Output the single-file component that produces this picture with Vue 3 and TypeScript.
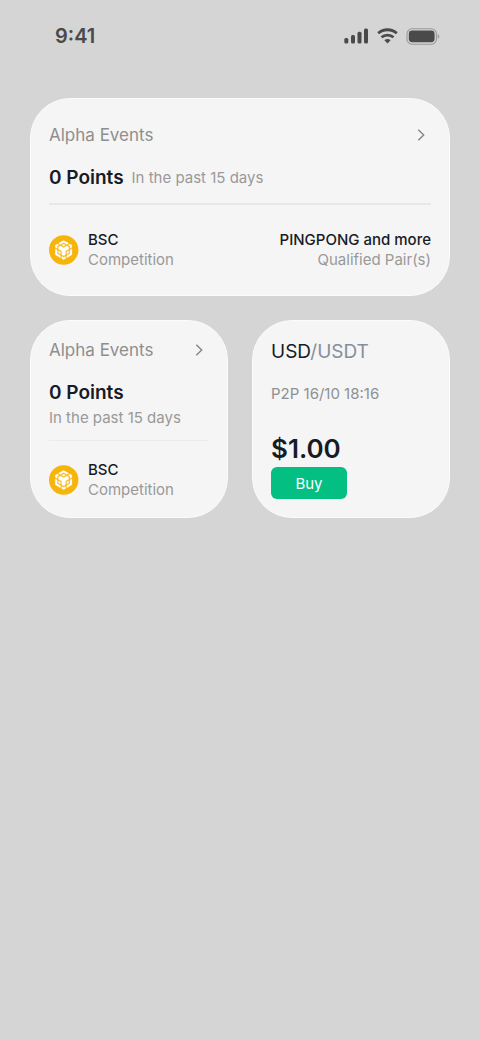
<script setup lang="ts">
interface Competition {
  chain: string
  kind: string
}

interface AlphaEvents {
  title: string
  points: string
  period: string
  competition: Competition
  pairs: string
  pairsLabel: string
}

const alpha: AlphaEvents = {
  title: 'Alpha Events',
  points: '0 Points',
  period: 'In the past 15 days',
  competition: { chain: 'BSC', kind: 'Competition' },
  pairs: 'PINGPONG and more',
  pairsLabel: 'Qualified Pair(s)',
}

const quote = { base: 'USD', counter: '/USDT', source: 'P2P 16/10 18:16', price: '$1.00' }

const cards = ['wide', 'small'] as const
</script>

<template>
  <div class="screen">
    <header class="status">
      <time class="clock">9:41</time>
      <div class="indicators">
        <svg width="25" height="16" viewBox="0 0 25 16" aria-hidden="true">
          <rect x="0.300" y="10" width="4" height="5.500" rx="1.500" />
          <rect x="7" y="7" width="4" height="8.500" rx="1.500" />
          <rect x="13.500" y="3.700" width="4" height="11.800" rx="1.500" />
          <rect x="20" y="0.500" width="4" height="15" rx="1.500" />
        </svg>
        <svg width="21" height="16" viewBox="0 0 21 16" aria-hidden="true">
          <path d="M1.200 5.200C6.300 0.600 14.700 0.600 19.800 5.200" fill="none" stroke="#4a4a4a" stroke-width="2.800" />
          <path d="M4.500 9.300c3.300-3 8.700-3 12 0" fill="none" stroke="#4a4a4a" stroke-width="2.700" />
          <path d="M7.400 12.300c1.800-1.600 4.400-1.600 6.200 0L10.500 15.600z" />
        </svg>
        <svg width="34" height="17" viewBox="0 0 34 17" aria-hidden="true">
          <rect x="1" y="0.800" width="29.400" height="15.400" rx="5" fill="none" stroke="#999" stroke-width="1.100" />
          <rect x="2.800" y="2.600" width="25.800" height="11.600" rx="3.400" />
          <path d="M31.800 6c1.900.7 1.900 4.300 0 5z" fill="#999" />
        </svg>
      </div>
    </header>

    <main class="widgets">
      <section v-for="size in cards" :key="size" class="card" :class="size">
        <div class="heading">
          <h2 class="title">{{ alpha.title }}</h2>
          <button class="more" type="button" aria-label="Open Alpha Events">
            <svg width="8" height="12" viewBox="0 0 8 12" aria-hidden="true">
              <path d="M1.300 0.800L6.700 6L1.300 11.200" fill="none" stroke="#858585" stroke-width="1.400" />
            </svg>
          </button>
        </div>
        <div class="score">
          <strong class="points">{{ alpha.points }}</strong>
          <span class="period">{{ alpha.period }}</span>
        </div>
        <hr class="divider" />
        <div class="event">
          <svg class="coin" viewBox="0 0 30 30" aria-hidden="true">
            <circle cx="14.700" cy="15" r="14.700" fill="#f7b50c" />
            <path
              transform="translate(5 5.400) scale(.8)"
              fill="#fff"
              stroke="#fff"
              stroke-width=".35"
              d="M5.631 3.676 12.001 0l6.367 3.676-2.340 1.358L12 2.716 7.972 5.034l-2.340-1.358Zm12.737 4.636-2.340-1.358L12 9.272 7.972 6.954l-2.340 1.358v2.716l4.026 2.318v4.636L12 19.341l2.341-1.359v-4.636l4.027-2.318V8.312Zm0 7.352v-2.716l-2.340 1.358v2.716l2.340-1.358Zm1.663.96-4.027 2.318v2.717l6.368-3.677V10.630l-2.340 1.358v4.636Zm-2.340-10.630 2.340 1.358v2.716l2.341-1.358V5.994l-2.340-1.358-2.342 1.358ZM9.657 19.926v2.716L12 24l2.341-1.359v-2.716l-2.340 1.358-2.342-1.358Zm-4.027-4.262 2.341 1.358v-2.716l-2.340-1.358v2.716Zm4.027-9.670L12 7.352l2.341-1.358L12 4.636 9.658 5.994Zm-5.690 1.358 2.341-1.358-2.340-1.358-2.341 1.358V8.710l2.340 1.358V7.352Zm0 4.636L1.627 10.630v7.353l6.368 3.677v-2.717L3.968 16.624v-4.636Z"
            />
          </svg>
          <div class="lines">
            <span class="name">{{ alpha.competition.chain }}</span>
            <span class="note">{{ alpha.competition.kind }}</span>
          </div>
          <div v-if="size === 'wide'" class="lines pairs">
            <span class="name">{{ alpha.pairs }}</span>
            <span class="note">{{ alpha.pairsLabel }}</span>
          </div>
        </div>
      </section>

      <section class="card quote">
        <h2 class="pair">{{ quote.base }}<span class="counter">{{ quote.counter }}</span></h2>
        <p class="source">{{ quote.source }}</p>
        <strong class="price">{{ quote.price }}</strong>
        <button class="buy" type="button">Buy</button>
      </section>
    </main>
  </div>
</template>

<style>
body {
  background: #d5d5d5;
}
</style>

<style scoped>
.screen {
  min-height: 100vh;
  background: #d5d5d5;
  font-family: Inter, 'Liberation Sans', sans-serif;
  color: #171b26;
}

.status {
  display: flex;
  align-items: center;
  justify-content: space-between;
  padding: 24px 40px 0 55px;
  height: 24px;
}

.clock {
  font-size: 20px;
  line-height: 24px;
  font-weight: 600;
  color: #4a4a4a;
}

.indicators {
  display: flex;
  align-items: center;
  gap: 8px;
  fill: #4a4a4a;
}

.widgets {
  display: grid;
  grid-template-columns: 1fr 1fr;
  gap: 24px;
  padding: 50px 30px 30px;
}

.card {
  box-sizing: border-box;
  min-width: 0;
  padding: 18px 18px 17px;
  border: 1px solid #fbfbfb;
  border-radius: 40px;
  background: #f5f5f5;
}

.wide {
  padding: 25px 18px;
  grid-column: 1 / -1;
}

.heading {
  display: flex;
  align-items: center;
  justify-content: space-between;
}

.title {
  margin: 0;
  font-size: 17px;
  line-height: 22px;
  font-weight: 400;
  color: #8e8e8e;
}

.more {
  display: flex;
  padding: 4px 6px;
  border: 0;
  background: none;
}

.score {
  display: flex;
  flex-direction: column;
  margin-top: 17px;
}

.wide .score {
  flex-direction: row;
  align-items: center;
  gap: 8px;
}

.points {
  font-size: 19px;
  line-height: 29px;
  font-weight: 600;
}

.period {
  font-size: 15px;
  line-height: 22px;
  color: #999;
}

.divider {
  height: 1px;
  margin: 11px 0 19px;
  border: 0;
  background: #ececec;
}

.wide .divider {
  height: 2px;
  margin: 11px 0 25px;
  background: #e8e8e8;
}

.event {
  display: flex;
  align-items: center;
}

.coin {
  flex: none;
  width: 30px;
  height: 30px;
  margin-right: 9px;
}

.lines {
  display: flex;
  flex-direction: column;
  line-height: 20px;
}

.pairs {
  margin-left: auto;
  text-align: right;
}

.name {
  font-size: 15px;
  font-weight: 500;
}

.note {
  font-size: 15px;
  color: #999;
}

.quote {
  display: flex;
  flex-direction: column;
  align-items: flex-start;
}

.pair {
  margin: 0;
  font-size: 19px;
  line-height: 26px;
  font-weight: 400;
}

.counter {
  color: #848e9c;
}

.source {
  margin: 19px 0 27px;
  font-size: 15px;
  line-height: 20px;
  color: #8e9094;
}

.price {
  font-size: 26px;
  line-height: 36px;
  font-weight: 600;
}

.buy {
  width: 76px;
  height: 32px;
  padding: 0;
  border: 0;
  border-radius: 6px;
  background: #03c082;
  color: #fff;
  font-family: inherit;
  font-size: 15px;
}
</style>
